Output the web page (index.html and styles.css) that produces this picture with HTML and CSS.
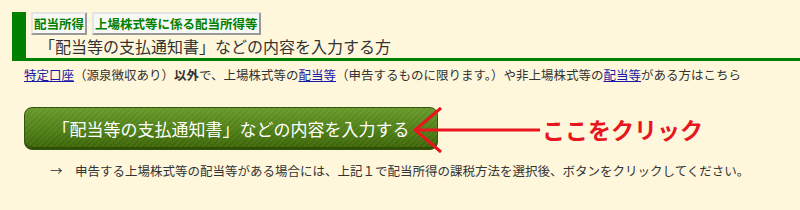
FILE: index.html
```html
<!DOCTYPE html>
<html lang="ja">
<head>
<meta charset="UTF-8" />
<meta name="viewport" content="width=device-width, initial-scale=1.0"/>
<title>配当所得</title>
<link rel="stylesheet" href="styles.css">
</head>
<body>
<div class="heading">
  <div class="tags">
    <span class="tag">配当所得</span>
    <span class="tag">上場株式等に係る配当所得等</span>
  </div>
  <h2>「配当等の支払通知書」などの内容を入力する方</h2>
</div>

<p class="note"><a href="#">特定口座</a>（源泉徴収あり）<b>以外</b>で、上場株式等の<a href="#">配当等</a>（申告するものに限ります。）や非上場株式等の<a href="#">配当等</a>がある方はこちら</p>

<div class="action">
  <button class="input-btn">「配当等の支払通知書」などの内容を入力する</button>
  <svg class="arrow" width="132" height="48" viewBox="0 0 132 48">
    <path d="M29 2 L3 24 L29 46 M3 24 L128 24" fill="none" stroke="#e8141e" stroke-width="3"/>
  </svg>
  <span class="click-here">ここをクリック</span>
</div>

<p class="hint">→　申告する上場株式等の配当等がある場合には、上記１で配当所得の課税方法を選択後、ボタンをクリックしてください。</p>
</body>
</html>
```

FILE: styles.css
```css
body {
  margin: 0;
  background: #fff7dc;
  font-family: "Noto Sans CJK JP", sans-serif;
  color: #333;
}

.heading {
  margin: 12px 0 0 12px;
  border-left: 14px solid #008000;
  border-bottom: 3px solid #008000;
  padding-left: 5px;
}

.tags {
  display: flex;
  gap: 5px;
}

.tag {
  font-size: 12.5px;
  font-weight: bold;
  line-height: 19px;
  color: #008000;
  background: #f8f8f6;
  border: 2px solid #999;
  border-top-color: #e4e4e4;
  border-left-color: #e4e4e4;
  padding: 0 1px;
}

h2 {
  margin: 0;
  padding-left: 8px;
  font-size: 16px;
  font-weight: normal;
  line-height: 23px;
}

.note {
  margin: 4px 0 0 24px;
  font-size: 12.5px;
  line-height: 20px;
}

.note a {
  color: #1a1aa6;
}

.action {
  position: relative;
  display: flex;
  align-items: center;
  margin-top: 22px;
  padding-left: 24px;
}

.input-btn {
  width: 414px;
  height: 43px;
  padding: 0;
  border: 1px solid #34560a;
  border-radius: 8px;
  background:
    repeating-linear-gradient(135deg, rgba(255,255,255,0.05) 0 2px, rgba(0,0,0,0) 2px 4px),
    linear-gradient(#67982a, #4d7d14 55%, #3b6207);
  box-shadow: inset 0 -2px 0 #2e4d05;
  color: #fff;
  font-family: inherit;
  font-size: 17px;
  cursor: pointer;
}

.arrow {
  position: absolute;
  left: 412px;
  top: -1px;
}

.click-here {
  margin-left: 104px;
  font-size: 23px;
  font-weight: bold;
  color: #e8141e;
}

.hint {
  margin: 11px 0 0 50px;
  font-size: 12.5px;
  line-height: 20px;
}
```
